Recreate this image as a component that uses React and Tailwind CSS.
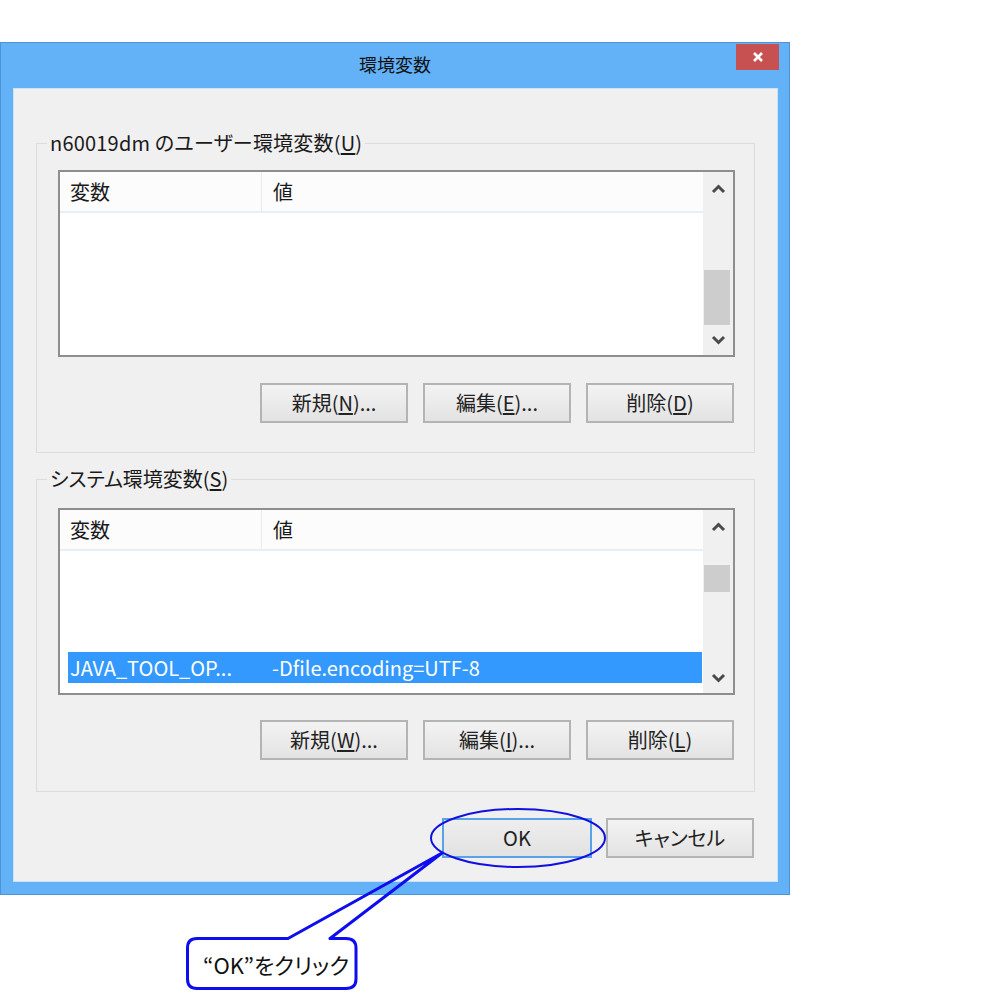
import React from 'react';

const Chevron = ({ up }) => (
  <svg width="15" height="10" viewBox="0 0 15 10">
    <path d={up ? 'M2 8 L7.5 2.5 L13 8' : 'M2 2 L7.5 7.5 L13 2'} fill="none" stroke="#4a4a4a" strokeWidth="3" />
  </svg>
);

const Btn = ({ label, mn, dots }) => (
  <button className="w-[148px] h-[40px] border-2 border-[#b4b4b4] bg-linear-to-b from-[#f3f3f3] to-[#e3e3e3] text-[20px] text-[#222] leading-none flex items-center justify-center">
    {label}(<span className="underline underline-offset-2">{mn}</span>){dots && '...'}
  </button>
);

const ListView = ({ thumb, children }) => (
  <div className="h-[187px] border-2 border-[#8e8e8e] bg-white flex">
    <div className="flex-1 flex flex-col">
      <div className="h-[41px] flex bg-[#fcfcfc] border-b-2 border-[#e6eef8] text-[20px] text-[#1a1a1a]">
        <div className="w-[202px] border-r border-[#ebebeb] pl-[10px] flex items-center">変数</div>
        <div className="pl-[11px] flex items-center">値</div>
      </div>
      <div className="flex-1 flex flex-col">{children}</div>
    </div>
    <div className="w-[30px] bg-[#f0f0f0] flex flex-col">
      <div className="h-[34px] flex items-center justify-center"><Chevron up /></div>
      <div className="flex-1">{thumb}</div>
      <div className="h-[30px] flex items-center justify-center"><Chevron /></div>
    </div>
  </div>
);

export default function App() {
  return (
    <div className="w-[982px] h-[994px] bg-white pt-[42px] font-['Noto_Sans_CJK_JP','Noto_Sans',sans-serif] [font-feature-settings:'palt']">
      <div className="w-[790px] h-[853px] bg-[#63b1f7] border border-[#4d94d6] flex flex-col">
        <div className="h-[45px] relative flex justify-center pt-[9px]">
          <span className="text-[18px] text-[#111] leading-[24px]">環境変数</span>
          <div className="absolute right-[10px] top-[1px] w-[43px] h-[26px] bg-[#c75050] flex items-center justify-center">
            <svg width="12" height="12" viewBox="0 0 12 12">
              <path d="M2 2 L10 10 M10 2 L2 10" stroke="#fff" strokeWidth="2.6" />
            </svg>
          </div>
        </div>
        <div className="flex-1 ml-[12px] mr-[11px] mb-[12px] bg-[#f0f0f0] border border-[#cfe2f5] flex flex-col px-[22px] pt-[40px]">
          <fieldset className="border border-[#dcdcdc] p-0 m-0 min-w-0">
            <legend className="ml-[10px] px-[3px] text-[20px] leading-[28px] text-[#1a1a1a] tracking-[0.2px]">
              n60019dm のユーザー環境変数(<span className="underline underline-offset-2">U</span>)
            </legend>
            <div className="pl-[21px] pr-[19px] pt-[13px] pb-[29px]">
              <ListView thumb={<div className="mt-[64px] h-[55px] mx-[1px] mr-[3px] bg-[#cdcdcd]" />} />
              <div className="flex justify-end gap-[15px] mt-[26px] mr-[1px]">
                <Btn label="新規" mn="N" dots />
                <Btn label="編集" mn="E" dots />
                <Btn label="削除" mn="D" />
              </div>
            </div>
          </fieldset>
          <fieldset className="border border-[#dcdcdc] p-0 m-0 mt-[12px] min-w-0">
            <legend className="ml-[10px] px-[3px] text-[20px] leading-[28px] text-[#1a1a1a]">
              システム環境変数(<span className="underline underline-offset-2">S</span>)
            </legend>
            <div className="pl-[21px] pr-[19px] pt-[15px] pb-[31px]">
              <ListView thumb={<div className="mt-[21px] h-[27px] mx-[1px] mr-[3px] bg-[#cdcdcd]" />}>
                <div className="flex-1" />
                <div className="h-[31px] ml-[8px] mr-[1px] mb-[10px] bg-[#3399ff] flex items-center text-white text-[20px] leading-none">
                  <div className="w-[203px] pl-[2px]">JAVA_TOOL_OP...</div>
                  <div className="pl-[1px]">-Dfile.encoding=UTF-8</div>
                </div>
              </ListView>
              <div className="flex justify-end gap-[15px] mt-[25px] mr-[1px]">
                <Btn label="新規" mn="W" dots />
                <Btn label="編集" mn="I" dots />
                <Btn label="削除" mn="L" />
              </div>
            </div>
          </fieldset>
          <div className="flex justify-end gap-[14px] mt-[26px] mr-[1px]">
            <div className="relative">
              <button className="w-[150px] h-[40px] border-2 border-[#5aa2e8] bg-linear-to-b from-[#eeeeee] to-[#e2e2e2] text-[20px] text-[#222] leading-none flex items-center justify-center">
                OK
              </button>
              <svg className="absolute left-[-14px] top-[-12px] overflow-visible" width="180" height="64" viewBox="0 0 180 64">
                <ellipse cx="90" cy="32" rx="87" ry="29" fill="none" stroke="#1010e0" strokeWidth="2" />
              </svg>
            </div>
            <button className="w-[148px] h-[40px] border-2 border-[#b4b4b4] bg-linear-to-b from-[#f3f3f3] to-[#e3e3e3] text-[20px] text-[#222] leading-none flex items-center justify-center">
              キャンセル
            </button>
          </div>
        </div>
      </div>
      <div className="relative ml-[186px] mt-[42px] w-[172px] h-[53px] flex items-center pl-[17px] text-[22px] text-[#111] leading-none whitespace-nowrap">
        <svg className="absolute left-0 top-[-90px] overflow-visible" width="280" height="145" viewBox="0 -90 280 145">
          <path
            d="M102 1.5 L256 -84 L144 1.5 H160 Q170 1.5 170 11 V42 Q170 51.5 160 51.5 H11 Q1.5 51.5 1.5 42 V11 Q1.5 1.5 11 1.5 Z"
            fill="none"
            stroke="#0d0df0"
            strokeWidth="3"
            strokeLinejoin="round"
          />
        </svg>
        <span className="relative">“OK”をクリック</span>
      </div>
    </div>
  );
}
